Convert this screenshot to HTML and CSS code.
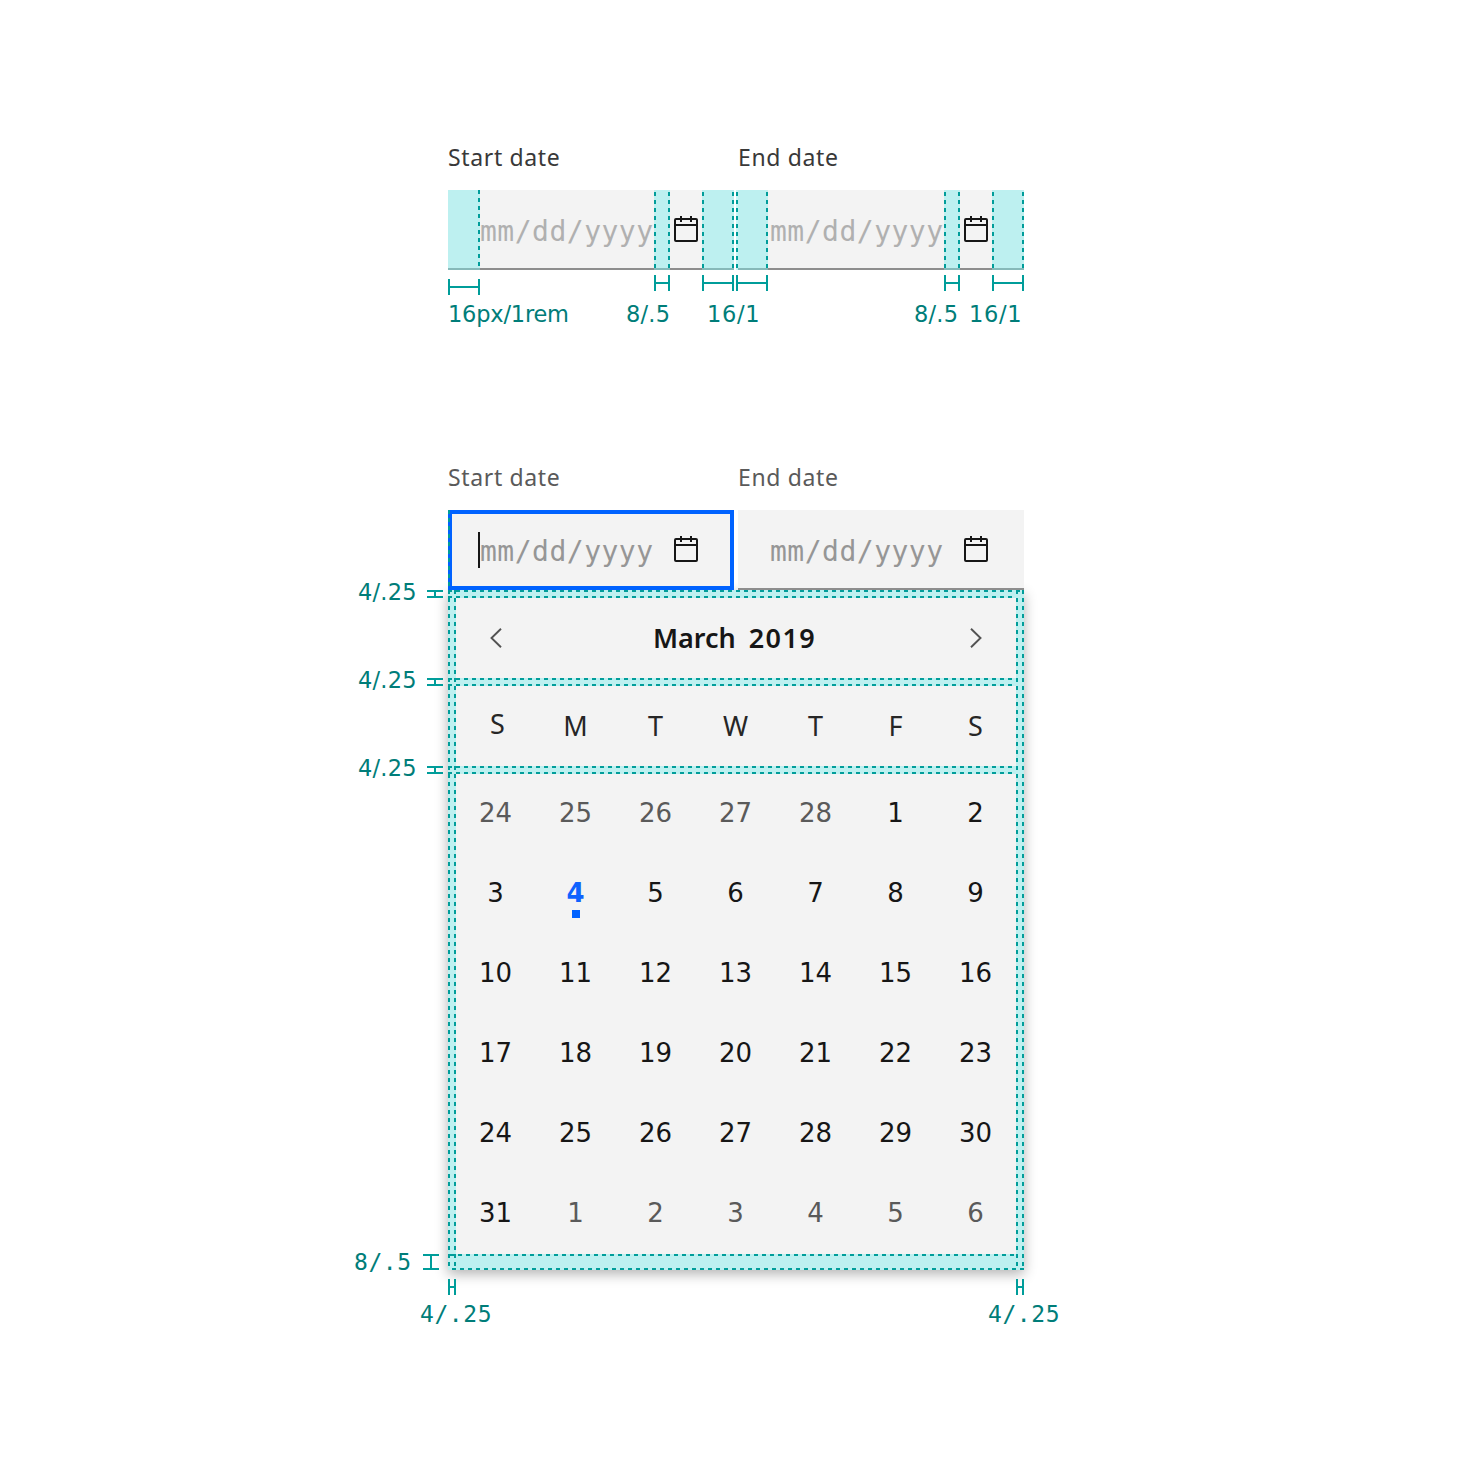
FILE: index.html
```
<!DOCTYPE html>
<html lang="en">
<head>
<meta charset="utf-8">
<title>Date range picker spacing</title>
<link rel="stylesheet" href="styles.css">
</head>
<body>
<svg class="defs" aria-hidden="true">
  <symbol id="calendar" viewBox="0 0 24 26">
    <rect x="1" y="3" width="22" height="22" rx="1"/>
    <path d="M1 9H23M7 0V6M17 0V6"/>
  </symbol>
</svg>
<main class="board">
  <section class="picker closed">
    <div class="fields">
      <div class="field"><label>Start date</label><div class="input"><span class="hint">mm/dd/yyyy</span><svg class="icon"><use href="#calendar"/></svg></div></div>
      <div class="field"><label>End date</label><div class="input"><span class="hint">mm/dd/yyyy</span><svg class="icon"><use href="#calendar"/></svg></div></div>
    </div>
  </section>

  <section class="picker open">
    <div class="fields">
      <div class="field"><label>Start date</label><div class="input focused"><i class="caret"></i><span class="hint">mm/dd/yyyy</span><svg class="icon"><use href="#calendar"/></svg></div></div>
      <div class="field"><label>End date</label><div class="input"><span class="hint">mm/dd/yyyy</span><svg class="icon"><use href="#calendar"/></svg></div></div>
    </div>
    <div class="calendar">
      <header class="month">
        <svg class="arrow" viewBox="0 0 12 20"><path d="M11 .8 1.5 10 11 19.2"/></svg>
        <h1><span>March</span><span class="year">2019</span></h1>
        <svg class="arrow" viewBox="0 0 12 20"><path d="M1 .8 10.5 10 1 19.2"/></svg>
      </header>
      <div class="weekdays"><span class="first">S</span><span>M</span><span>T</span><span>W</span><span>T</span><span>F</span><span>S</span></div>
      <div class="days">
        <span class="out">24</span><span class="out">25</span><span class="out">26</span><span class="out">27</span><span class="out">28</span><span>1</span><span>2</span>
        <span>3</span><span class="today">4</span><span>5</span><span>6</span><span>7</span><span>8</span><span>9</span>
        <span>10</span><span>11</span><span>12</span><span>13</span><span>14</span><span>15</span><span>16</span>
        <span>17</span><span>18</span><span>19</span><span>20</span><span>21</span><span>22</span><span>23</span>
        <span>24</span><span>25</span><span>26</span><span>27</span><span>28</span><span>29</span><span>30</span>
        <span>31</span><span class="out">1</span><span class="out">2</span><span class="out">3</span><span class="out">4</span><span class="out">5</span><span class="out">6</span>
      </div>
    </div>
  </section>

  <svg class="specs" viewBox="0 0 1472 1472">
    <g class="zone">
      <path d="M448 190h32v80h-32zM654 190h16v80h-16zM702 190h32v80h-32zM736 190h32v80h-32zM944 190h16v80h-16zM992 190h32v80h-32z"/>
      <path d="M448 590h576v680h-576zM456 598v80h560v-80zM456 686v80h560v-80zM456 774v480h560v-480z" fill-rule="evenodd"/>
    </g>
    <g class="dash">
      <path d="M479 190V270M655 192V270M669 192V270M703 192V270M733 192V270M737 192V270M767 192V270M945 192V270M959 192V270M993 192V270M1023 192V270"/>
      <path d="M449 510V1270M455 590V1270M1017 590V1270M1023 590V1270"/>
      <path d="M448 591H1024M448 597H1016M448 679H1016M448 685H1016M448 767H1016M448 773H1016M450 1255H1016M452 1269H1024"/>
    </g>
    <g class="ruler">
      <path d="M449 279V295M479 279V295M449 287H479"/>
      <path d="M655 275V291M669 275V291M655 283H669M703 275V291M733 275V291M703 283H733M737 275V291M767 275V291M737 283H767"/>
      <path d="M945 275V291M959 275V291M945 283H959M993 275V291M1023 275V291M993 283H1023"/>
      <path d="M427 591H443M427 597H443M435 591V597M427 679H443M427 685H443M435 679V685M427 767H443M427 773H443M435 767V773"/>
      <path d="M423 1255H439M423 1269H439M431 1255V1269"/>
      <path d="M449 1279V1295M455 1279V1295M449 1287H455M1017 1279V1295M1023 1279V1295M1017 1287H1023"/>
    </g>
    <g class="note">
      <text x="448" y="322" textLength="121">16px/1rem</text>
      <text x="626" y="322" textLength="44">8/.5</text>
      <text x="707" y="322" textLength="52.500">16/1</text>
      <text x="914" y="322" textLength="44">8/.5</text>
      <text x="969" y="322" textLength="52.500">16/1</text>
      <text x="358" y="600" textLength="58.500">4/.25</text>
      <text x="358" y="688" textLength="58.500">4/.25</text>
      <text x="358" y="776" textLength="58.500">4/.25</text>
    </g>
    <g class="note mono">
      <text x="354" y="1270" textLength="57">8/.5</text>
      <text x="420" y="1322" textLength="71.500">4/.25</text>
      <text x="988" y="1322" textLength="71.500">4/.25</text>
    </g>
  </svg>
</main>
</body>
</html>
```
FILE: styles.css
```
* { box-sizing: border-box; }
body { margin: 0; background: #fff; color: #161616; font-family: "Noto Sans", sans-serif; }
.defs { position: absolute; width: 0; height: 0; }
.board { position: relative; width: 1472px; height: 1472px; padding: 141px 448px 0; display: flex; flex-direction: column; gap: 191px; }
.fields { display: flex; gap: 4px; }
.field { flex: 1; }
label { display: block; height: 49px; font-size: 23px; line-height: 32px; letter-spacing: .65px; color: #393939; }
.open label { color: #5a5a5a; }
.input { position: relative; height: 80px; padding: 0 36px 0 32px; display: flex; align-items: center; justify-content: space-between; background: #f3f3f3; border-bottom: 2px solid #8d8d8d; }
.hint { font: 28px/36px "DejaVu Sans Mono", monospace; letter-spacing: .5px; color: #b0b0b0; padding-top: 5px; }
.open .hint { color: #969696; }
.icon { width: 24px; height: 26px; fill: none; stroke: #161616; stroke-width: 2; }
.focused { border: 4px solid #0062ff; padding: 0 32px 2px 28px; }
.caret { position: absolute; left: 26px; top: 18px; width: 2px; height: 36px; background: #161616; }

.calendar { height: 680px; padding: 8px; background: #f3f3f3; box-shadow: 0 4px 12px rgba(0,0,0,.3); }
.month { height: 80px; padding: 0 34px; display: flex; align-items: center; justify-content: space-between; }
.arrow { width: 12px; height: 20px; fill: none; stroke: #525252; stroke-width: 1.9; }
h1 { margin: 0 3px 0 0; display: flex; gap: 13px; font-size: 27px; line-height: 36px; font-weight: 600; }
.year { letter-spacing: 1.4px; }
.weekdays { display: grid; grid-template-columns: repeat(7, 80px); height: 80px; margin-top: 8px; padding-bottom: 2px; align-items: center; text-align: center; font-size: 27px; color: #262626; }
.weekdays span { margin-right: 1px; }
.first { position: relative; left: 2px; top: -2px; }
.days { display: grid; grid-template: repeat(6, 80px) / repeat(7, 80px); margin-top: 8px; text-align: center; font: 26px/78px "DejaVu Sans", sans-serif; }
.days span { padding-right: 1px; }
.out { color: #5a5a5a; }
.today { position: relative; color: #0f62fe; font-weight: 700; }
.today::after { content: ""; position: absolute; left: 36px; top: 56px; width: 8px; height: 8px; background: #0062ff; }

.specs { position: absolute; left: 0; top: 0; width: 1472px; height: 1472px; }
.zone { fill: rgba(126,237,237,.46); }
.dash { fill: none; stroke: #009d9a; stroke-width: 2; stroke-dasharray: 4 4; }
.ruler { fill: none; stroke: #009d9a; stroke-width: 2; }
.note { fill: #007d79; font: 22.5px "DejaVu Sans", sans-serif; }
.mono { font: 23px "DejaVu Sans Mono", monospace; }
```
